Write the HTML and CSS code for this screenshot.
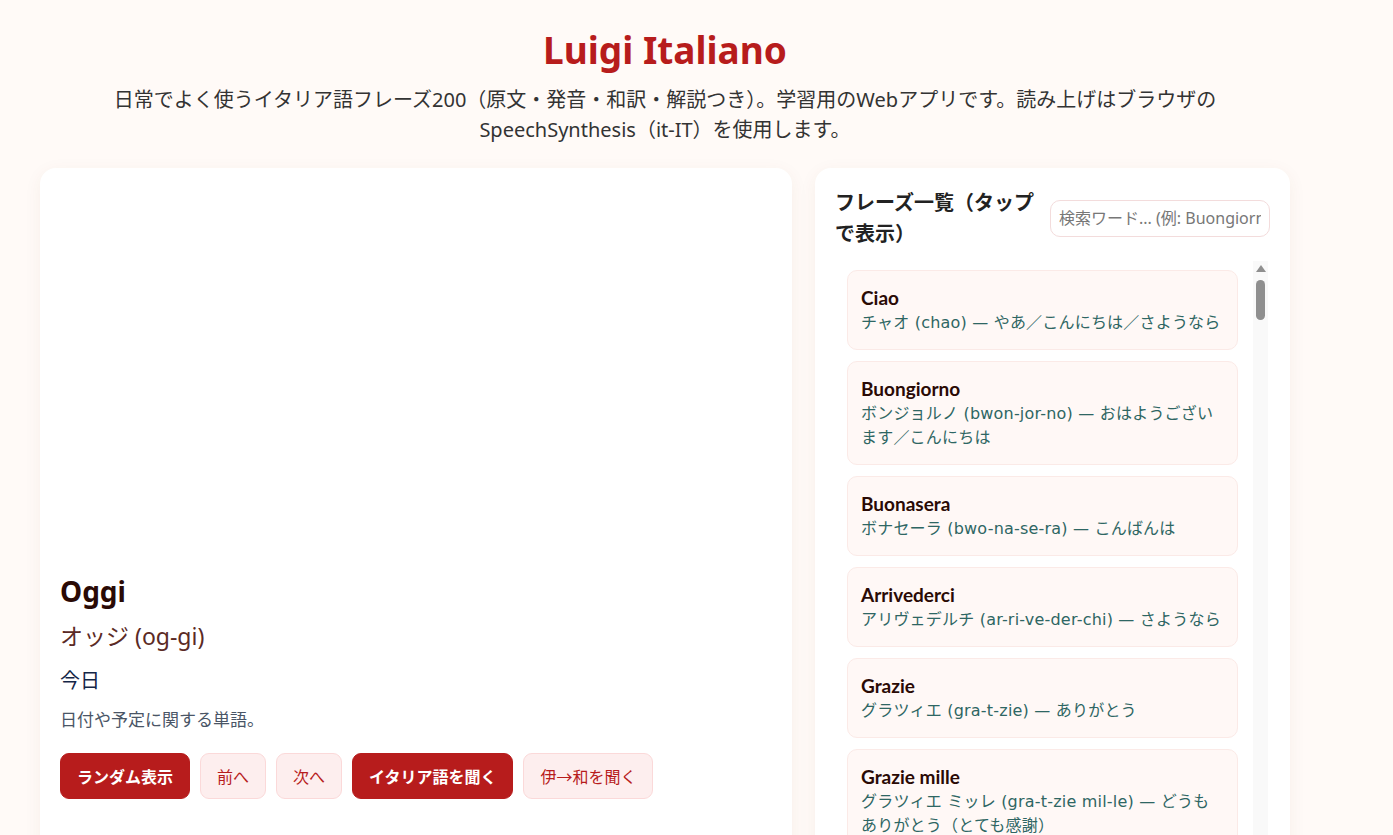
FILE: index.html
```html
<!DOCTYPE html>
<html lang="ja">
<head>
  <meta charset="UTF-8">
  <title>Luigi Italiano</title>
  <link rel="stylesheet" href="styles.css">
</head>
<body>
  <div class="wrap">
    <header class="top">
      <h1>Luigi Italiano</h1>
      <p class="lead">日常でよく使うイタリア語フレーズ200（原文・発音・和訳・解説つき）。学習用のWebアプリです。読み上げはブラウザのSpeechSynthesis（it-IT）を使用します。</p>
    </header>

    <main class="layout">
      <section class="card viewer">
        <div class="art"></div>
        <h2 class="word" id="word">Oggi</h2>
        <div class="reading" id="reading">オッジ (og-gi)</div>
        <div class="meaning" id="meaning">今日</div>
        <div class="note" id="note">日付や予定に関する単語。</div>
        <div class="actions">
          <button class="btn primary" onclick="showRandom()">ランダム表示</button>
          <button class="btn soft" onclick="step(-1)">前へ</button>
          <button class="btn soft" onclick="step(1)">次へ</button>
          <button class="btn primary" onclick="speakIt()">イタリア語を聞く</button>
          <button class="btn soft" onclick="speakBoth()">伊→和を聞く</button>
        </div>
      </section>

      <aside class="card side">
        <div class="side-head">
          <h3>フレーズ一覧（タップで表示）</h3>
          <input class="search" id="search" type="text" placeholder="検索ワード... (例: Buongiorno)">
        </div>
        <div class="list-box">
          <div class="list" id="list"></div>
          <div class="rail">
            <span class="rail-up"></span>
            <span class="rail-thumb" id="thumb"></span>
          </div>
        </div>
      </aside>
    </main>
  </div>

  <script>
    // [原文, カナ, 発音, 和訳, 解説]
    const phrases = [
      ["Ciao", "チャオ", "chao", "やあ／こんにちは／さようなら"],
      ["Buongiorno", "ボンジョルノ", "bwon-jor-no", "おはようございます／こんにちは"],
      ["Buonasera", "ボナセーラ", "bwo-na-se-ra", "こんばんは"],
      ["Arrivederci", "アリヴェデルチ", "ar-ri-ve-der-chi", "さようなら"],
      ["Grazie", "グラツィエ", "gra-t-zie", "ありがとう"],
      ["Grazie mille", "グラツィエ ミッレ", "gra-t-zie mil-le", "どうもありがとう（とても感謝）"],
      ["Prego", "プレーゴ", "pre-go", "どういたしまして"],
      ["Per favore", "ペル ファヴォーレ", "per fa-vo-re", "お願いします"],
      ["Scusi", "スクーズィ", "sku-zi", "すみません（丁寧）"],
      ["Scusa", "スクーザ", "sku-za", "ごめん"],
      ["Mi dispiace", "ミ ディスピアーチェ", "mi di-spia-che", "申し訳ありません"],
      ["Sì", "スィ", "si", "はい"],
      ["No", "ノ", "no", "いいえ"],
      ["Buonanotte", "ブオナノッテ", "bwo-na-not-te", "おやすみなさい"],
      ["A presto", "ア プレスト", "a pre-sto", "また近いうちに"],
      ["A dopo", "ア ドーポ", "a do-po", "また後で"],
      ["Come stai?", "コメ スタイ", "ko-me stai", "元気？"],
      ["Come sta?", "コメ スタ", "ko-me sta", "お元気ですか？"],
      ["Sto bene", "スト ベーネ", "sto be-ne", "元気です"],
      ["Piacere", "ピアチェーレ", "pia-che-re", "はじめまして"],
      ["Mi chiamo...", "ミ キアーモ", "mi kia-mo", "私の名前は…です"],
      ["Come ti chiami?", "コメ ティ キアーミ", "ko-me ti kia-mi", "お名前は？"],
      ["Di dove sei?", "ディ ドーヴェ セイ", "di do-ve sei", "どこの出身？"],
      ["Sono giapponese", "ソノ ジャッポネーゼ", "so-no jap-po-ne-ze", "日本人です"],
      ["Parla inglese?", "パルラ イングレーゼ", "par-la in-gle-ze", "英語を話せますか？"],
      ["Non capisco", "ノン カピスコ", "non ka-pi-sko", "わかりません"],
      ["Capisco", "カピスコ", "ka-pi-sko", "わかります"],
      ["Può ripetere?", "プオ リペーテレ", "pwo ri-pe-te-re", "もう一度言ってもらえますか？"],
      ["Piano, per favore", "ピアーノ ペル ファヴォーレ", "pia-no per fa-vo-re", "ゆっくりお願いします"],
      ["Dov'è il bagno?", "ドヴェ イル バーニョ", "do-ve il ba-nyo", "トイレはどこですか？"],
      ["Quanto costa?", "クアント コスタ", "kwan-to ko-sta", "いくらですか？"],
      ["Il conto, per favore", "イル コント ペル ファヴォーレ", "il kon-to per fa-vo-re", "お会計をお願いします"],
      ["Un caffè, per favore", "ウン カッフェ ペル ファヴォーレ", "un kaf-fe per fa-vo-re", "コーヒーをひとつください"],
      ["Acqua naturale", "アックア ナトゥラーレ", "ak-kwa na-tu-ra-le", "炭酸なしの水"],
      ["Acqua frizzante", "アックア フリッツァンテ", "ak-kwa frit-tsan-te", "炭酸水"],
      ["Buon appetito", "ブオン アッペティート", "bwon ap-pe-ti-to", "いただきます"],
      ["Salute!", "サルーテ", "sa-lu-te", "乾杯！"],
      ["Che ore sono?", "ケ オーレ ソーノ", "ke o-re so-no", "何時ですか？"],
      ["Oggi", "オッジ", "og-gi", "今日", "日付や予定に関する単語。"],
      ["Domani", "ドマーニ", "do-ma-ni", "明日", "日付や予定に関する単語。"],
      ["Ieri", "イエーリ", "ie-ri", "昨日", "日付や予定に関する単語。"],
      ["Adesso", "アデッソ", "a-des-so", "今"],
      ["Aiuto!", "アイウート", "a-iu-to", "助けて！"],
      ["Attenzione", "アッテンツィオーネ", "at-ten-tsio-ne", "注意"],
      ["Va bene", "ヴァ ベーネ", "va be-ne", "大丈夫／OK"],
      ["Certo", "チェルト", "cher-to", "もちろん"],
      ["Forse", "フォルセ", "for-se", "たぶん"],
      ["Perfetto", "ペルフェット", "per-fet-to", "完璧"],
      ["Benissimo", "ベニッシモ", "be-nis-si-mo", "とても良い"],
      ["Che bello!", "ケ ベッロ", "ke bel-lo", "なんて素敵！"],
      ["Andiamo!", "アンディアーモ", "an-dia-mo", "行こう！"],
      ["Dove si trova...?", "ドーヴェ スィ トローヴァ", "do-ve si tro-va", "…はどこにありますか？"],
      ["A destra", "ア デストラ", "a de-stra", "右へ"],
      ["A sinistra", "ア スィニストラ", "a si-ni-stra", "左へ"],
      ["Sempre dritto", "センプレ ドリット", "sem-pre drit-to", "まっすぐ"],
      ["Vorrei...", "ヴォッレイ", "vor-rei", "…が欲しいのですが"],
      ["Ho fame", "オ ファーメ", "o fa-me", "お腹がすいた"],
      ["Ho sete", "オ セーテ", "o se-te", "のどが渇いた"],
      ["Sono stanco", "ソノ スタンコ", "so-no stan-ko", "疲れました"],
      ["Ti amo", "ティ アーモ", "ti a-mo", "愛してる"],
      ["Buona giornata", "ブオナ ジョルナータ", "bwo-na jor-na-ta", "良い一日を"],
      ["Buon viaggio", "ブオン ヴィアッジョ", "bwon viad-jo", "良い旅を"],
      ["Auguri!", "アウグーリ", "au-gu-ri", "おめでとう！"],
      ["In bocca al lupo", "イン ボッカ アル ルーポ", "in bok-ka al lu-po", "頑張って！"],
      ["Non lo so", "ノン ロ ソ", "non lo so", "知りません"],
      ["Tutto bene?", "トゥット ベーネ", "tut-to be-ne", "大丈夫？"],
      ["Nessun problema", "ネッスン プロブレーマ", "nes-sun pro-ble-ma", "問題ありません"],
      ["D'accordo", "ダッコルド", "dak-kor-do", "了解"],
      ["Un momento", "ウン モメント", "un mo-men-to", "ちょっと待って"],
      ["Mi piace", "ミ ピアーチェ", "mi pia-che", "好きです"],
      ["Stazione", "スタツィオーネ", "sta-tsio-ne", "駅"],
      ["Biglietto", "ビリエット", "bi-liet-to", "切符"]
    ];

    let current = 38;

    function show(i) {
      current = (i + phrases.length) % phrases.length;
      const p = phrases[current];
      document.getElementById("word").textContent = p[0];
      document.getElementById("reading").textContent = `${p[1]} (${p[2]})`;
      document.getElementById("meaning").textContent = p[3];
      document.getElementById("note").textContent = p[4] || "";
    }

    function step(d) { show(current + d); }
    function showRandom() { show(Math.floor(Math.random() * phrases.length)); }

    function say(text, lang) {
      if (!window.speechSynthesis) return;
      const u = new SpeechSynthesisUtterance(text);
      u.lang = lang;
      speechSynthesis.speak(u);
    }
    function speakIt() { say(phrases[current][0], "it-IT"); }
    function speakBoth() {
      say(phrases[current][0], "it-IT");
      say(phrases[current][3], "ja-JP");
    }

    function renderList(q) {
      const list = document.getElementById("list");
      list.innerHTML = "";
      phrases.forEach((p, i) => {
        const hay = p.join(" ").toLowerCase();
        if (q && !hay.includes(q.toLowerCase())) return;
        const item = document.createElement("div");
        item.className = "item";
        item.innerHTML = `<div class="it">${p[0]}</div><div class="jp">${p[1]} (${p[2]}) — ${p[3]}</div>`;
        item.onclick = () => show(i);
        list.appendChild(item);
      });
    }

    document.getElementById("search").oninput = e => renderList(e.target.value);
    renderList("");
  </script>
</body>
</html>
```

FILE: styles.css
```css
body {
  margin: 0;
  background: #fffaf7;
  color: #333;
  font-family: "Noto Sans", "Noto Sans CJK JP", sans-serif;
}
.wrap {
  max-width: 1250px;
  margin: 0 40px;
}
.top {
  text-align: center;
  padding-top: 27px;
}
h1 {
  margin: 0;
  color: #b71c1c;
  font-size: 37px;
  line-height: 46px;
  font-weight: 700;
}
.lead {
  margin: 12px 0 0;
  padding: 0 45px;
  font-size: 20px;
  line-height: 30px;
  color: #333;
}
.layout {
  display: grid;
  grid-template-columns: 752px 475px;
  gap: 23px;
  margin-top: 23px;
}
.card {
  background: #fff;
  border-radius: 16px;
  box-shadow: 0 4px 18px rgba(120, 60, 30, 0.06);
}
.viewer {
  padding: 20px;
  height: 760px;
}
.art {
  height: 385px;
}
.word {
  margin: 0;
  font-size: 28px;
  line-height: 36px;
  color: #2a0a05;
}
.reading {
  margin-top: 11px;
  font-size: 23px;
  line-height: 32px;
  color: #5b2a25;
}
.meaning {
  margin-top: 15px;
  font-size: 20px;
  line-height: 28px;
  color: #142647;
}
.note {
  margin-top: 12px;
  font-size: 17px;
  line-height: 26px;
  color: #4a5566;
}
.actions {
  display: flex;
  gap: 10px;
  margin-top: 20px;
}
.btn {
  height: 46px;
  padding: 0 16px;
  border-radius: 9px;
  font-family: inherit;
  font-size: 16px;
  cursor: pointer;
}
.primary {
  background: #b71c1c;
  border: 1px solid #b71c1c;
  color: #fff;
  font-weight: 700;
}
.soft {
  background: #fdeeee;
  border: 1px solid #fbd9d9;
  color: #b71c1c;
}
.side {
  padding: 19px 20px 20px;
  height: 760px;
}
.side-head {
  display: flex;
  align-items: center;
  gap: 15px;
}
.side-head h3 {
  margin: 0;
  flex: 1;
  font-size: 20px;
  line-height: 31px;
  color: #222;
}
.search {
  width: 220px;
  box-sizing: border-box;
  height: 37px;
  padding: 0 8px;
  border: 1px solid #f3dcdc;
  border-radius: 10px;
  font-family: inherit;
  font-size: 16px;
  color: #333;
}
.search::placeholder {
  color: #777;
}
.list-box {
  display: flex;
  margin-top: 12px;
  height: 620px;
}
.list {
  flex: 1;
  overflow-y: auto;
  scrollbar-width: none;
  padding: 9px 15px 9px 12px;
}
.rail {
  width: 15px;
  margin-right: 2px;
  background: #f9f9f9;
  display: flex;
  flex-direction: column;
  align-items: center;
}
.rail-up {
  margin-top: 4px;
  border-left: 5px solid transparent;
  border-right: 5px solid transparent;
  border-bottom: 7px solid #8f8f8f;
}
.rail-thumb {
  margin-top: 8px;
  width: 9px;
  height: 40px;
  border-radius: 5px;
  background: #8f8f8f;
}
.item {
  background: #fff8f6;
  border: 1px solid #fbeae7;
  border-radius: 10px;
  padding: 14px 13px;
  margin-bottom: 11px;
  cursor: pointer;
}
.it {
  font-size: 19px;
  line-height: 26px;
  font-weight: 700;
  color: #2a0a05;
  font-family: "Lato", "Noto Sans CJK JP", sans-serif;
}
.jp {
  font-size: 16px;
  line-height: 24px;
  letter-spacing: 0.2px;
  color: #2e6663;
  font-family: "DejaVu Sans", "Noto Sans CJK JP", sans-serif;
}
```
